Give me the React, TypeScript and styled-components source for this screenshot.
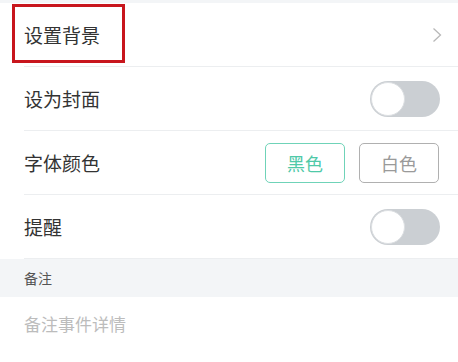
import React, { useState } from "react";
import styled, { createGlobalStyle } from "styled-components";

const Global = createGlobalStyle`
  html, body { margin: 0; padding: 0; background: #ffffff; }
  body { font-family: "Noto Sans CJK SC", "Noto Sans", sans-serif; -webkit-font-smoothing: antialiased; }
`;

const Page = styled.div`
  position: relative;
  width: 458px;
  height: 362px;
  overflow: hidden;
  background: #ffffff;
`;

const TopStrip = styled.div`
  height: 3px;
  background: #f3f5f7;
`;

const Row = styled.div`
  height: 63px;
  margin-left: 24px;
  padding-right: 18px;
  border-bottom: 1px solid #eceef0;
  display: flex;
  align-items: center;
  justify-content: space-between;
`;

const Label = styled.span`
  font-size: 19px;
  color: #333333;
  line-height: 1;
`;

const Highlight = styled.div`
  position: absolute;
  left: 12px;
  top: 4px;
  width: 113px;
  height: 59px;
  box-sizing: border-box;
  border: 3px solid #c8161d;
  pointer-events: none;
`;

const Chevron = styled.svg`
  width: 10px;
  height: 16px;
  margin-right: -2px;
`;

const Track = styled.button<{ $on: boolean }>`
  width: 70px;
  height: 36px;
  border-radius: 18px;
  border: none;
  padding: 1px;
  background: ${(p) => (p.$on ? "#4fc9a8" : "#cbcfd3")};
  display: flex;
  justify-content: ${(p) => (p.$on ? "flex-end" : "flex-start")};
  align-items: center;
  cursor: pointer;
  box-sizing: border-box;
`;

const Knob = styled.span`
  width: 34px;
  height: 34px;
  border-radius: 50%;
  background: #ffffff;
  box-sizing: border-box;
  border: 1px solid #dcdfe2;
`;

const ButtonGroup = styled.div`
  display: flex;
  gap: 14px;
  margin-right: 1px;
`;

const ColorButton = styled.button<{ $active: boolean }>`
  width: 80px;
  height: 40px;
  box-sizing: border-box;
  border-radius: 5px;
  background: #ffffff;
  border: 1px solid ${(p) => (p.$active ? "#6fd3b8" : "#b0b0b0")};
  color: ${(p) => (p.$active ? "#4fc9a8" : "#9a9a9a")};
  font-family: inherit;
  font-size: 18px;
  display: flex;
  align-items: center;
  justify-content: center;
  padding: 0;
  cursor: pointer;
`;

const SectionHeader = styled.div`
  height: 38px;
  background: #f3f5f7;
  padding-left: 24px;
  display: flex;
  align-items: center;
  font-size: 14px;
  color: #555555;
`;

const NoteArea = styled.div`
  padding: 15px 24px 0;
  font-size: 17px;
  color: #bcbcbc;
  line-height: 24px;
`;

const Toggle: React.FC = () => {
  const [on, setOn] = useState(false);
  return (
    <Track $on={on} onClick={() => setOn(!on)}>
      <Knob />
    </Track>
  );
};

export default function App() {
  const [color, setColor] = useState<"black" | "white">("black");
  return (
    <Page>
      <Global />
      <TopStrip />
      <Row>
        <Label>设置背景</Label>
        <Chevron viewBox="0 0 10 16">
          <path d="M1.5 1.5 L8.5 8 L1.5 14.5" fill="none" stroke="#b8b8b8" strokeWidth="1.3" />
        </Chevron>
      </Row>
      <Row>
        <Label>设为封面</Label>
        <Toggle />
      </Row>
      <Row>
        <Label>字体颜色</Label>
        <ButtonGroup>
          <ColorButton $active={color === "black"} onClick={() => setColor("black")}>黑色</ColorButton>
          <ColorButton $active={color === "white"} onClick={() => setColor("white")}>白色</ColorButton>
        </ButtonGroup>
      </Row>
      <Row>
        <Label>提醒</Label>
        <Toggle />
      </Row>
      <SectionHeader>备注</SectionHeader>
      <NoteArea>备注事件详情</NoteArea>
      <Highlight />
    </Page>
  );
}
